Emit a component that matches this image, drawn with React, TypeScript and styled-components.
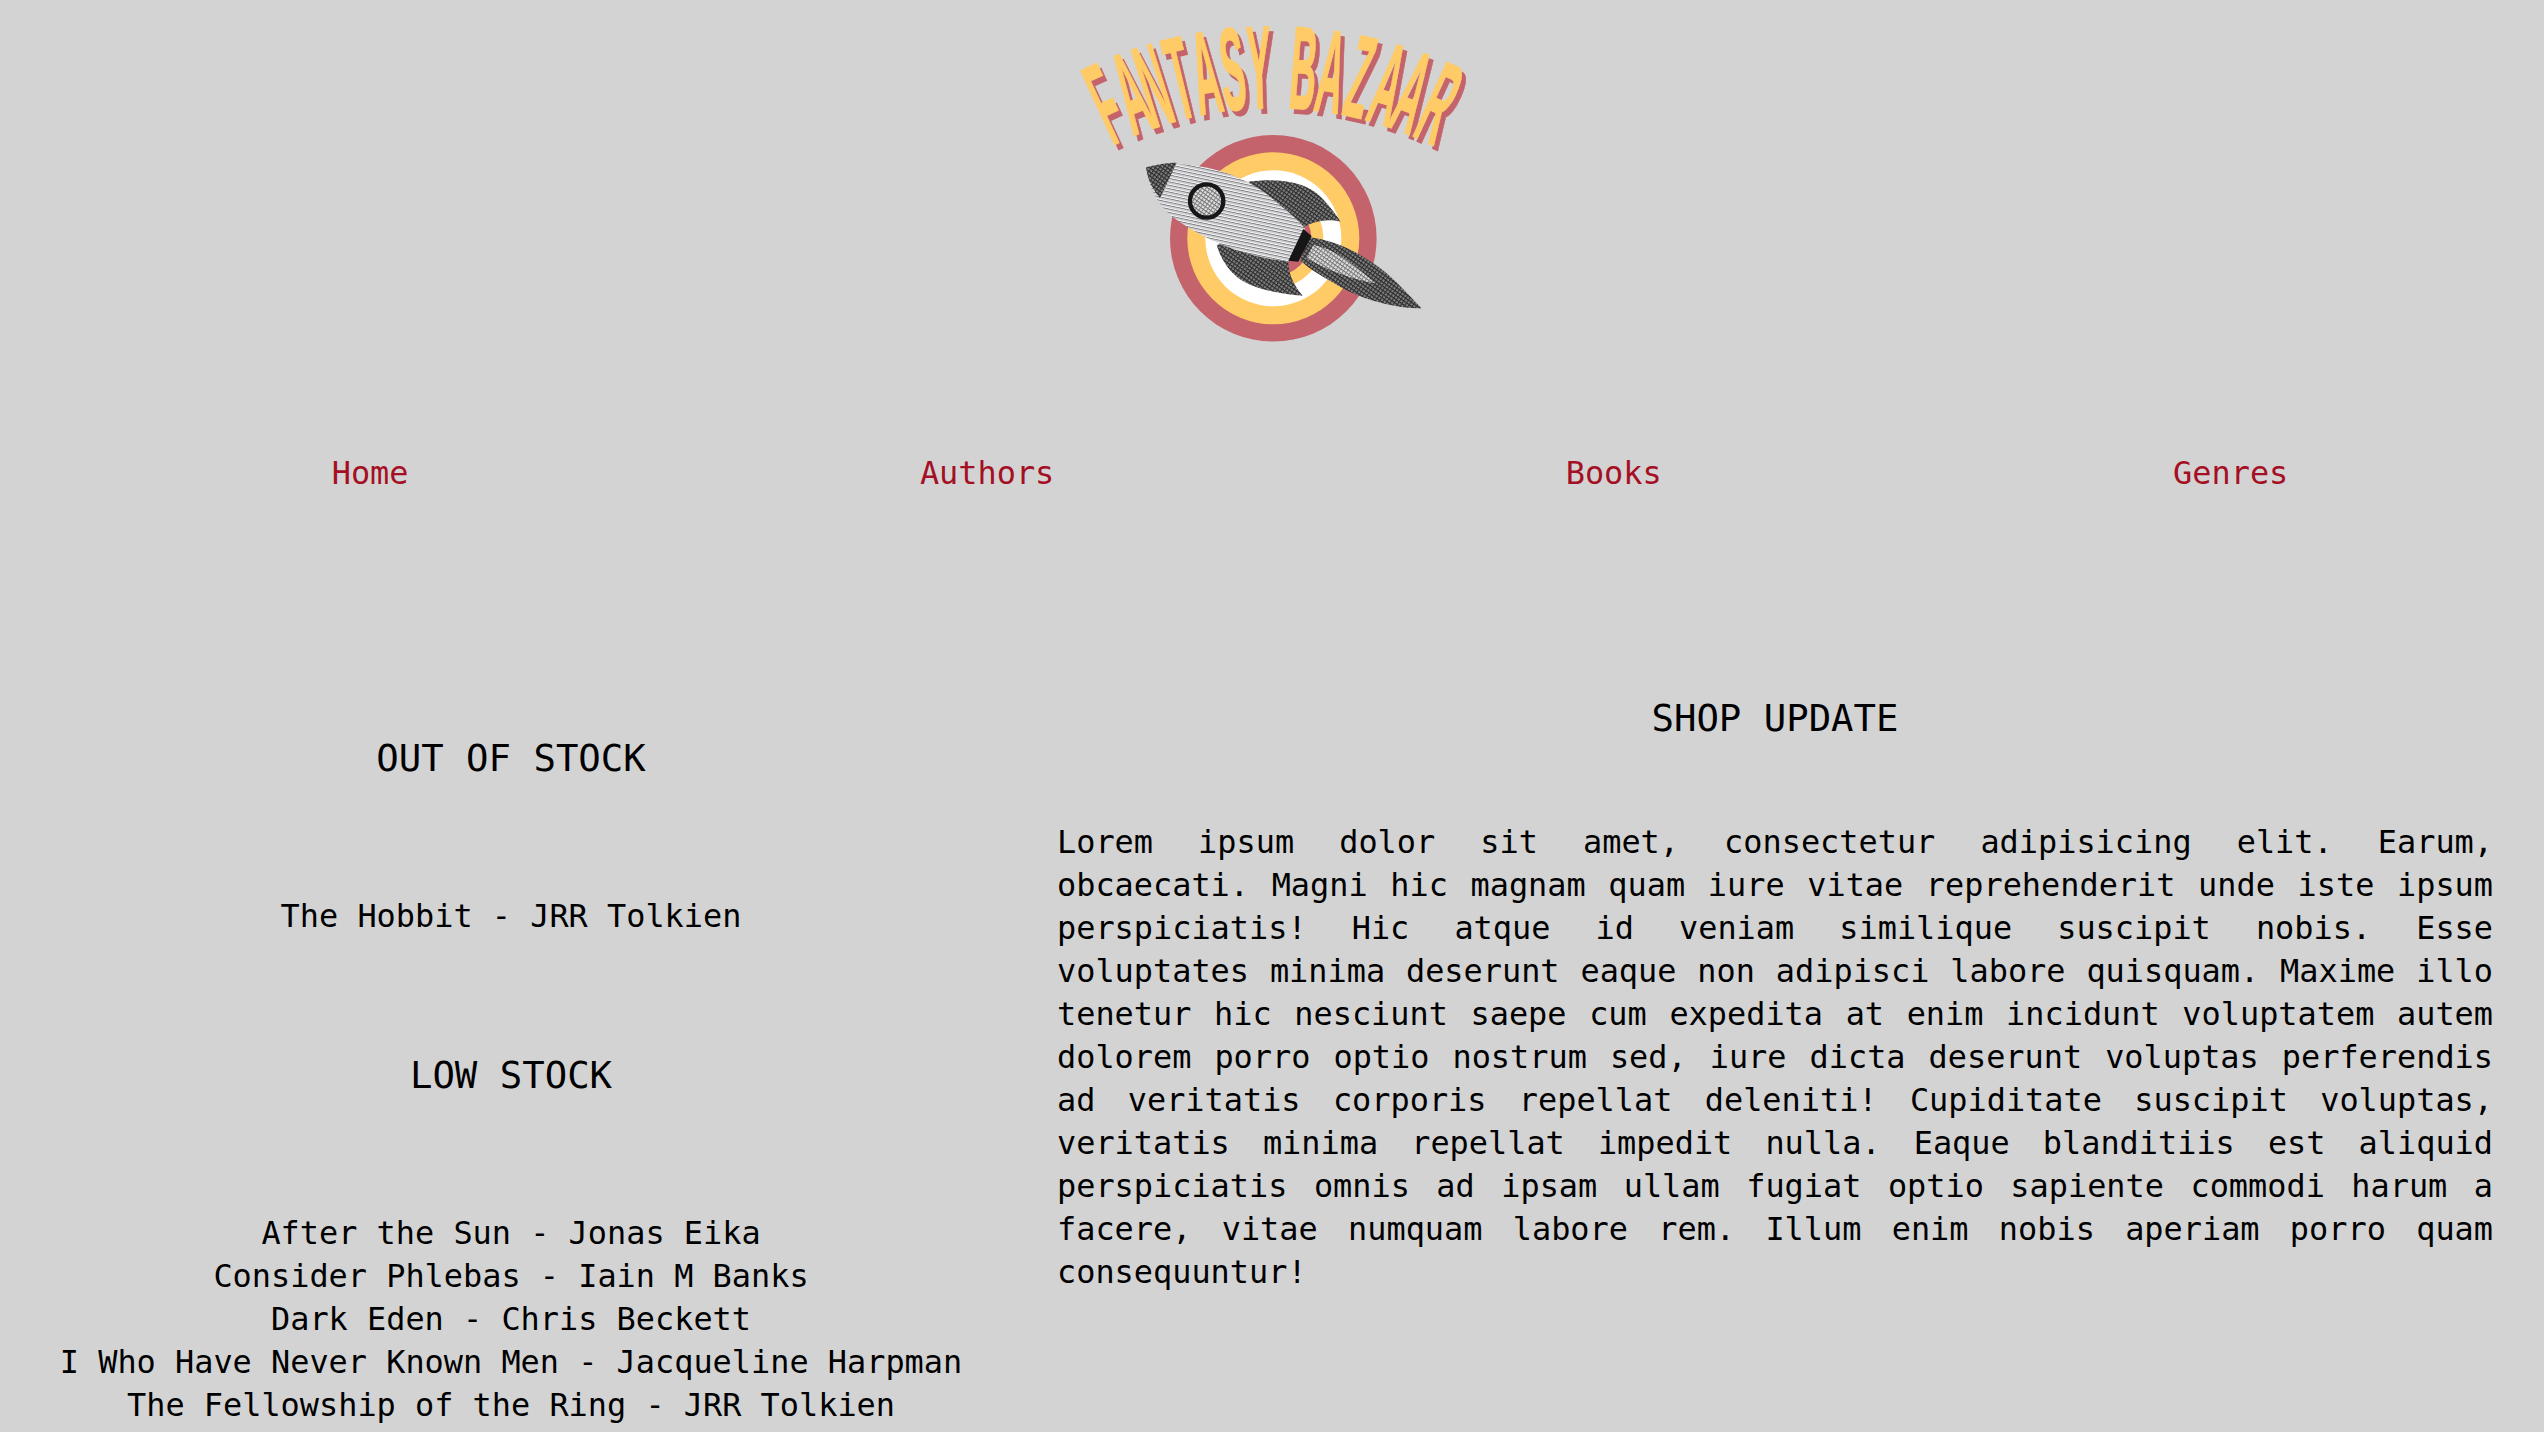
import React from 'react'
import styled, { createGlobalStyle } from 'styled-components'

const GlobalStyle = createGlobalStyle`
  html, body {
    margin: 0;
    padding: 0;
    background-color: #d3d3d3;
    overflow: hidden;
  }
  body {
    color: #000;
    font-family: "DejaVu Sans Mono", "Liberation Mono", monospace;
    font-size: 31.9px;
    line-height: 43px;
  }
`

const Page = styled.div`
  width: 2544px;
  height: 1432px;
  overflow: hidden;
`

const Header = styled.header`
  display: flex;
  justify-content: center;
  height: 430px;

  & > svg {
    width: 500px;
    height: 350px;
    display: block;
  }
`

const NavList = styled.ul`
  display: flex;
  justify-content: space-around;
  align-items: center;
  height: 86px;
  margin: 0;
  padding: 0 0 0 76px;
  list-style: none;
`

const NavLink = styled.a`
  color: #a50f23;
  text-decoration: none;
`

const Main = styled.main`
  display: flex;
  align-items: flex-start;
`

const StockColumn = styled.section`
  width: 1022px;
  padding-top: 217px;
  text-align: center;
`

const UpdateColumn = styled.section`
  width: 1436px;
  margin-left: 35px;
  padding-top: 177px;
`

const Heading = styled.h3`
  margin: 0;
  font-size: 37.3px;
  line-height: 50px;
  font-weight: 400;
  text-align: center;
`

const BookList = styled.ul`
  margin: 112px 0;
  padding: 0;
  list-style: none;
`

const Lorem = styled.p`
  margin: 78px 0 0;
  text-align: justify;
`

const title = [
  ['F', -24.8], ['A', -20.8], ['N', -17.4], ['T', -13.5], ['A', -9.7], ['S', -5.8], ['Y', -2],
  ['B', 4.4], ['A', 8.4], ['Z', 12.6], ['A', 16.8], ['A', 20.4], ['R', 24.6],
] as const

const LogoTitle = ({ fill, dx, dy }: { fill: string; dx: number; dy: number }) => (
  <g transform={`translate(${dx} ${dy})`} fill={fill} stroke={fill} strokeWidth="1.3">
    {title.map(([letter, angle], i) => (
      <text
        key={i}
        transform={`rotate(${angle} 1273 467) translate(1273 108) scale(0.31 1)`}
        textAnchor="middle"
        fontFamily="Liberation Sans"
        fontWeight="700"
        fontSize="118"
      >
        {letter}
      </text>
    ))}
  </g>
)

const Logo = () => (
  <svg viewBox="1022 0 500 350" role="img" aria-label="Fantasy Bazaar">
    <defs>
      <pattern id="lightInk" width="10" height="10" patternUnits="userSpaceOnUse" patternTransform="rotate(12)">
        <rect width="10" height="10" fill="#fbf9fb" />
        <rect width="10" height="3.4" fill="#7c7c7c" />
        <rect y="5.5" width="5" height="2" fill="#c878d8" opacity="0.55" />
        <rect x="5" y="5.5" width="5" height="2" fill="#58b878" opacity="0.55" />
      </pattern>
      <pattern id="darkInk" width="10" height="10" patternUnits="userSpaceOnUse" patternTransform="rotate(35)">
        <rect width="10" height="10" fill="#828282" />
        <rect width="10" height="3.4" fill="#262626" />
        <rect width="3.4" height="10" fill="#303030" />
      </pattern>
      <pattern id="midInk" width="10" height="10" patternUnits="userSpaceOnUse" patternTransform="rotate(35)">
        <rect width="10" height="10" fill="#e2e0e2" />
        <rect width="10" height="3" fill="#6a6a6a" />
        <rect width="3" height="10" fill="#808080" />
      </pattern>
    </defs>

    <LogoTitle fill="#c4636b" dx={4} dy={5} />
    <LogoTitle fill="#ffcb66" dx={0} dy={0} />

    <circle cx="1273.3" cy="238.3" r="103.3" fill="#c4636b" />
    <circle cx="1273.3" cy="238.3" r="86" fill="#ffcb66" />
    <circle cx="1273.3" cy="238.3" r="68" fill="#fff" />
    <circle cx="1273.3" cy="238.3" r="50" fill="#ffcb66" />
    <circle cx="1273.3" cy="238.3" r="38" fill="#c4636b" />

    <g transform="translate(1120 130) scale(0.3333)">
      <path
        fill="url(#darkInk)"
        d="M385,155 C460,145 540,150 590,190 C620,215 645,250 662,275 C620,265 580,275 550,292 L470,280 Z"
      />
      <path
        fill="url(#darkInk)"
        d="M290,345 L400,320 L505,395 C505,435 525,470 548,497 C480,490 400,480 350,440 C320,415 300,380 290,345 Z"
      />
      <path
        fill="url(#lightInk)"
        d="M78,112 C200,85 350,120 450,200 C500,240 540,275 555,295 L505,395 C400,385 260,340 150,255 C110,220 85,170 78,112 Z"
      />
      <path fill="url(#darkInk)" d="M78,112 C100,105 140,98 170,98 L120,205 C95,175 82,145 78,112 Z" />
      <circle cx="260" cy="213" r="50" fill="url(#midInk)" stroke="#161616" strokeWidth="13" />
      <path
        fill="url(#darkInk)"
        d="M570,322 C640,330 720,365 800,430 C840,465 880,510 905,535 C840,535 740,515 660,470 C610,440 570,420 540,390 Z"
      />
      <path fill="url(#midInk)" d="M580,345 C640,355 700,400 765,460 C700,450 620,420 560,385 Z" />
      <path fill="#161616" d="M550,297 L575,318 L535,395 L505,392 Z" />
    </g>
  </svg>
)

const navItems = ['Home', 'Authors', 'Books', 'Genres']
const outOfStock = ['The Hobbit - JRR Tolkien']
const lowStock = [
  'After the Sun - Jonas Eika',
  'Consider Phlebas - Iain M Banks',
  'Dark Eden - Chris Beckett',
  'I Who Have Never Known Men - Jacqueline Harpman',
  'The Fellowship of the Ring - JRR Tolkien',
]

const App: React.FC = () => (
  <Page>
    <GlobalStyle />
    <Header>
      <Logo />
    </Header>
    <nav>
      <NavList>
        {navItems.map(item => (
          <li key={item}>
            <NavLink href="#">{item}</NavLink>
          </li>
        ))}
      </NavList>
    </nav>
    <Main>
      <StockColumn>
        <Heading>OUT OF STOCK</Heading>
        <BookList>
          {outOfStock.map(book => <li key={book}>{book}</li>)}
        </BookList>
        <Heading>LOW STOCK</Heading>
        <BookList>
          {lowStock.map(book => <li key={book}>{book}</li>)}
        </BookList>
      </StockColumn>
      <UpdateColumn>
        <Heading>SHOP UPDATE</Heading>
        <Lorem>
          Lorem ipsum dolor sit amet, consectetur adipisicing elit. Earum, obcaecati. Magni hic magnam quam iure vitae
          reprehenderit unde iste ipsum perspiciatis! Hic atque id veniam similique suscipit nobis. Esse voluptates minima
          deserunt eaque non adipisci labore quisquam. Maxime illo tenetur hic nesciunt saepe cum expedita at enim incidunt
          voluptatem autem dolorem porro optio nostrum sed, iure dicta deserunt voluptas perferendis ad veritatis corporis
          repellat deleniti! Cupiditate suscipit voluptas, veritatis minima repellat impedit nulla. Eaque blanditiis est
          aliquid perspiciatis omnis ad ipsam ullam fugiat optio sapiente commodi harum a facere, vitae numquam labore rem.
          Illum enim nobis aperiam porro quam consequuntur!
        </Lorem>
      </UpdateColumn>
    </Main>
  </Page>
)

export default App
